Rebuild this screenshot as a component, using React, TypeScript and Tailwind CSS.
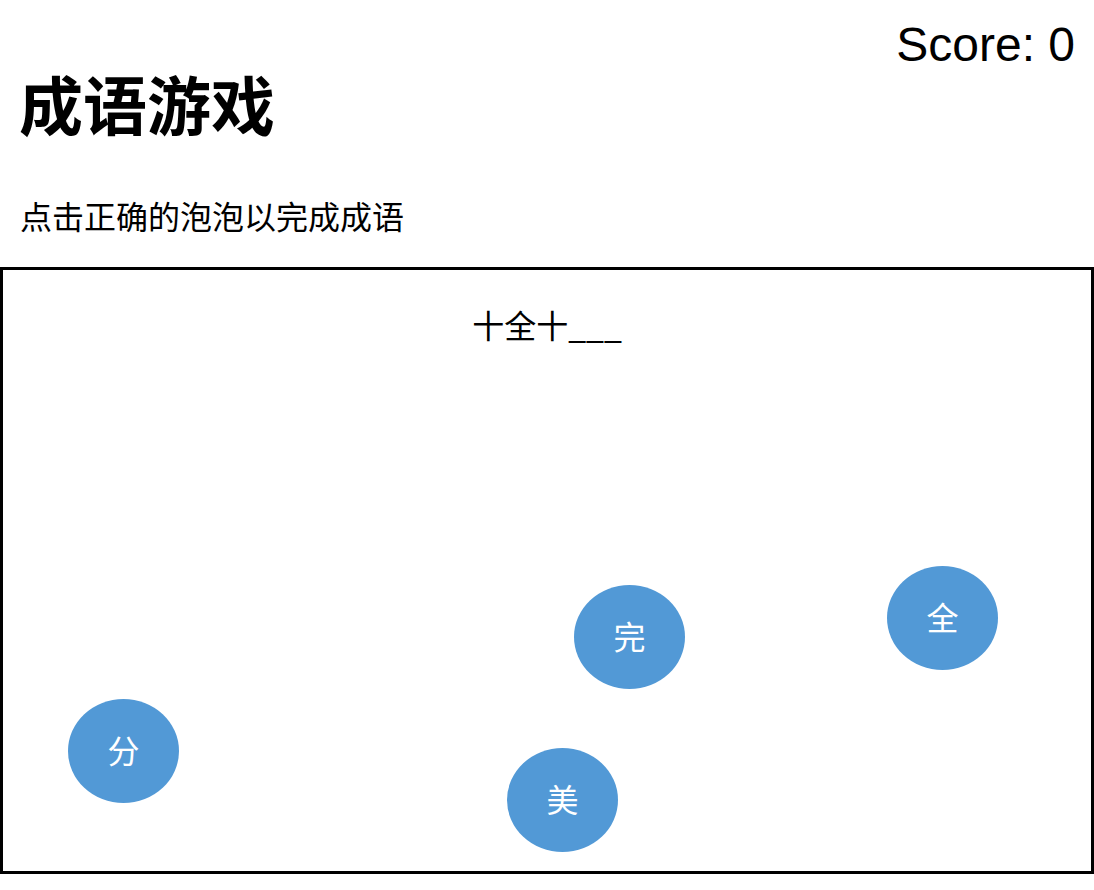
const CJK = '"Noto Sans CJK SC", "Noto Sans", sans-serif'

const BUBBLES = [
  { char: '分', pos: 'left-[65px] top-[429px]' },
  { char: '完', pos: 'left-[571px] top-[315px]' },
  { char: '全', pos: 'left-[884px] top-[296px]' },
  { char: '美', pos: 'left-[504px] top-[478px]' },
]

export default function App() {
  return (
    <div className="min-h-[890px] bg-white text-black" style={{ fontFamily: CJK }}>
      <div className="pt-[21px] pr-[19px] text-right text-[48px] leading-none font-['Liberation_Sans',Arial,sans-serif]">
        Score: 0
      </div>

      <h1 className="mt-px pl-[19px] text-[64px] leading-[64px] font-bold">成语游戏</h1>

      <p className="mt-[65px] pl-5 text-[32px] leading-[32px]">点击正确的泡泡以完成成语</p>

      <div className="relative mt-[36px] h-[607px] w-full border-[3px] border-black">
        <div className="pt-[38px] text-center text-[32px] leading-[32px]">十全十___</div>

        {BUBBLES.map((b) => (
          <button
            key={b.char}
            type="button"
            className={`absolute ${b.pos} flex h-[104px] w-[111px] items-center justify-center rounded-[50%] bg-[#5299d6] pb-[5px] text-[32px] leading-none text-white`}
          >
            {b.char}
          </button>
        ))}
      </div>
    </div>
  )
}
